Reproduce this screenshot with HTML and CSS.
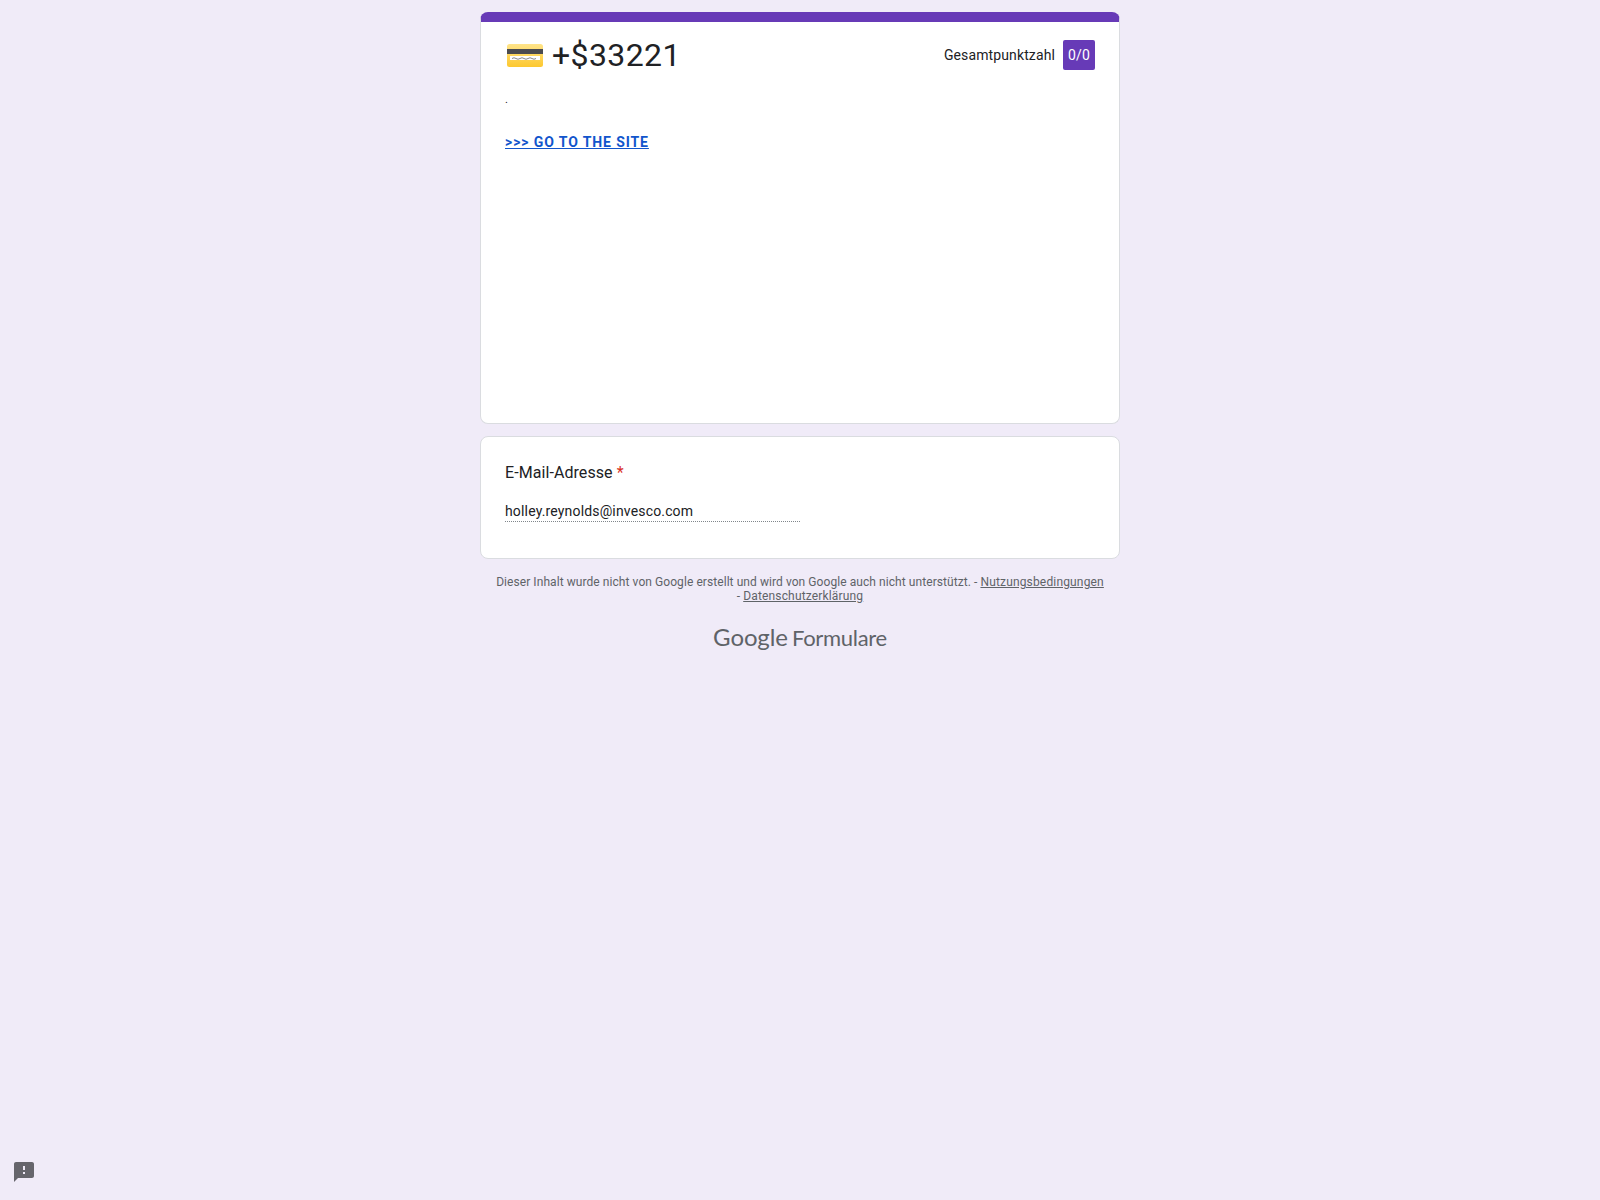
FILE: index.html
```html
<!DOCTYPE html>
<html lang="de">
<head>
    <meta charset="UTF-8">
    <title>+$33221</title>
    <link rel="stylesheet" href="styles.css">
</head>
<body>
    <div class="container">
        <div class="card header-card">
            <div class="title-row">
                <h1 class="title">
                    <svg class="card-icon" width="36" height="23" viewBox="0 0 36 23">
                        <defs>
                            <linearGradient id="gold" x1="0" y1="0" x2="0" y2="1">
                                <stop offset="0" stop-color="#ffe48a"/>
                                <stop offset="1" stop-color="#fdc82f"/>
                            </linearGradient>
                        </defs>
                        <rect width="36" height="23" rx="2.5" fill="url(#gold)"/>
                        <rect y="5" width="36" height="5" fill="#4b4b4f"/>
                        <rect x="3" y="12" width="30" height="4" fill="#fff"/>
                        <path d="M5 14.500 q2 -1.500 4 0 t4 0 t4 0 t4 0 t4 0 t4 0" fill="none" stroke="#555" stroke-width="0.7"/>
                    </svg>
                    <span>+$33221</span>
                </h1>
                <div class="score">
                    <span class="score-label">Gesamtpunktzahl</span>
                    <span class="score-badge">0/0</span>
                </div>
            </div>
            <div class="description">
                <p class="dot">.</p>
                <a class="site-link" href="#">&gt;&gt;&gt; GO TO THE SITE</a>
            </div>
        </div>

        <div class="card email-card">
            <div class="email-label">E-Mail-Adresse <span class="required">*</span></div>
            <div class="email-value">holley.reynolds@invesco.com</div>
        </div>

        <div class="footer-text">
            Dieser Inhalt wurde nicht von Google erstellt und wird von Google auch nicht unterstützt. - <a href="#">Nutzungsbedingungen</a> - <a href="#">Datenschutzerklärung</a>
        </div>
        <div class="brand"><span class="brand-google">Google</span> <span class="brand-forms">Formulare</span></div>
    </div>

    <svg class="report-icon" width="24" height="24" viewBox="0 0 24 24">
        <path d="M20 2H4c-1.100 0-2 .9-2 2v18l4-4h14c1.100 0 2-.9 2-2V4c0-1.100-.9-2-2-2zm-7 12h-2v-2h2v2zm0-4h-2V6h2v4z" fill="#66656c"/>
    </svg>
</body>
</html>
```

FILE: styles.css
```css
body {
    margin: 0;
    padding: 0;
    min-height: 1200px;
    background: #f0ebf8;
    font-family: Roboto, 'Liberation Sans', sans-serif;
    color: #202124;
}

.container {
    width: 640px;
    margin: 0 auto;
    padding-top: 12px;
}

.card {
    background: #fff;
    border: 1px solid #dadce0;
    border-radius: 8px;
    box-sizing: border-box;
    padding: 0 24px;
}

.header-card {
    height: 412px;
    border-top: 10px solid #673ab7;
    padding-top: 16px;
}

.title-row {
    display: flex;
    justify-content: space-between;
    align-items: flex-start;
}

.title {
    display: flex;
    align-items: center;
    gap: 9px;
    margin: 0;
    padding-left: 2px;
    font-size: 32px;
    font-weight: 400;
    line-height: 34px;
    letter-spacing: 0.4px;
}

.card-icon {
    display: block;
    margin-bottom: -1px;
}

.score {
    display: flex;
    align-items: center;
    gap: 8px;
    padding-top: 2px;
    font-size: 14px;
    letter-spacing: 0.12px;
}

.score-badge {
    width: 32px;
    height: 30px;
    line-height: 30px;
    text-align: center;
    background: #673ab7;
    border-radius: 2px;
    color: #fff;
}

.description {
    margin-top: 20px;
}

.dot {
    margin: 0;
    font-size: 11px;
    line-height: 16px;
    color: #202124;
}

.site-link {
    display: inline-block;
    margin-top: 24px;
    font-size: 14px;
    line-height: 20px;
    font-weight: 700;
    letter-spacing: 0.9px;
    color: #1155cc;
}

.email-card {
    height: 123px;
    margin-top: 12px;
    padding-top: 24px;
}

.email-label {
    font-size: 16px;
    line-height: 24px;
    letter-spacing: 0.07px;
}

.required {
    color: #d93025;
}

.email-value {
    width: 295px;
    margin-top: 16px;
    font-size: 14px;
    line-height: 20px;
    letter-spacing: 0.16px;
    border-bottom: 1px dotted #80868b;
}

.footer-text {
    margin-top: 16px;
    padding: 0 14px;
    font-size: 12px;
    line-height: 14px;
    letter-spacing: 0.07px;
    text-align: center;
    color: #5f6368;
}

.footer-text a {
    color: #5f6368;
    letter-spacing: 0.16px;
}

.brand {
    margin-top: 19px;
    text-align: center;
    color: #5f6368;
    font-family: Lato, sans-serif;
    line-height: 30px;
}

.brand-google {
    font-size: 24px;
    letter-spacing: -0.1px;
}

.brand-forms {
    font-size: 22px;
    letter-spacing: -0.3px;
}

/* sits over the page in the corner */
.report-icon {
    position: fixed;
    left: 12px;
    bottom: 16px;
}
```
